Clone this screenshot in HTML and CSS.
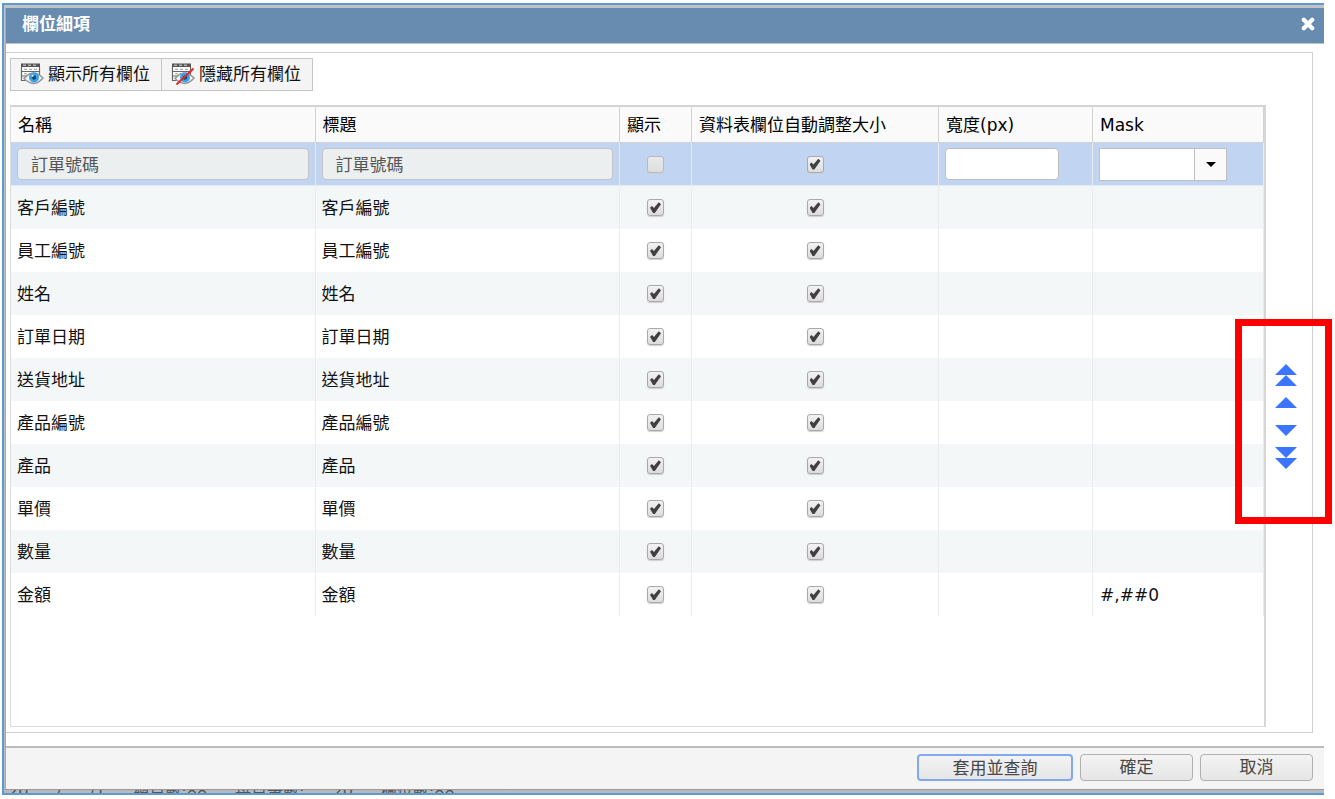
FILE: index.html
```
<!DOCTYPE html>
<html lang="zh-Hant">
<head>
<meta charset="utf-8">
<title>欄位細項</title>
<link rel="stylesheet" href="styles.css">
</head>
<body>
<div class="frame">
  <section class="dialog" role="dialog" aria-labelledby="dlg-title">
    <header class="titlebar">
      <h1 id="dlg-title">欄位細項</h1>
      <button class="close" aria-label="關閉">
        <svg width="14" height="14" viewBox="0 0 14 14"><path d="M2.8 2.8 11.2 11.2M11.2 2.8 2.8 11.2" stroke="#fff" stroke-width="4.2" stroke-linecap="round"/></svg>
      </button>
    </header>
    <div class="content">
      <div class="panel">
        <div class="toolbar">
          <button class="tool">
            <svg width="24" height="24" viewBox="0 0 24 24">
              <path d="M1 2h19v16H1z" fill="#fff"/><path d="M1 1.5h19v3.5H1z" fill="#555"/>
              <path d="M3 3.2h15" stroke="#ddd" stroke-dasharray="3 2"/>
              <path d="M1.5 5v13.5h5M19.5 5v8M1.5 9.5h18M1.5 14h7" stroke="#666" stroke-width="1.2" fill="none"/>
              <path d="M4 7.3h13M4 11.8h9M4 16.2h3" stroke="#999" stroke-dasharray="3 2"/>
              <path d="M4 16.5Q13 6 23 16Q14 26.500 4 16.500Z" fill="#f7f7f7" stroke="#999" stroke-width="1.6"/>
              <circle cx="14" cy="15.500" r="5" fill="#36a4ec"/><circle cx="14" cy="15.500" r="2.200" fill="#124a78"/><circle cx="12.600" cy="13.800" r="1" fill="#fff"/>
            </svg>
            <span>顯示所有欄位</span>
          </button>
          <button class="tool">
            <svg width="24" height="24" viewBox="0 0 24 24">
              <path d="M1 2h19v16H1z" fill="#fff"/><path d="M1 1.500h19v3.500H1z" fill="#555"/>
              <path d="M3 3.200h15" stroke="#ddd" stroke-dasharray="3 2"/>
              <path d="M1.500 5v13.500h5M19.500 5v8M1.500 9.500h18M1.500 14h7" stroke="#666" stroke-width="1.200" fill="none"/>
              <path d="M4 7.300h13M4 11.800h9M4 16.200h3" stroke="#999" stroke-dasharray="3 2"/>
              <path d="M4 16.500Q13 6 23 16Q14 26.500 4 16.500Z" fill="#f7f7f7" stroke="#999" stroke-width="1.600"/>
              <circle cx="14" cy="15.500" r="5" fill="#36a4ec"/><circle cx="14" cy="15.500" r="2.200" fill="#124a78"/>
              <path d="M5.500 22.500 22.500 6.500" stroke="#e32626" stroke-width="2"/>
            </svg>
            <span>隱藏所有欄位</span>
          </button>
        </div>
        <div class="body">
          <div class="grid">
            <table>
              <colgroup><col><col><col class="c-show"><col class="c-auto"><col class="c-width"><col class="c-mask"></colgroup>
              <thead>
                <tr><th>名稱</th><th>標題</th><th>顯示</th><th>資料表欄位自動調整大小</th><th>寬度(px)</th><th>Mask</th></tr>
              </thead>
              <tbody>
                <tr class="selected">
                  <td><input class="field" type="text" value="訂單號碼" aria-label="名稱" disabled></td>
                  <td><input class="field" type="text" value="訂單號碼" aria-label="標題" disabled></td>
                  <td class="mid"><input type="checkbox" aria-label="顯示" disabled></td>
                  <td class="mid"><input type="checkbox" aria-label="自動調整大小" checked></td>
                  <td><input class="field short" type="text" aria-label="寬度(px)"></td>
                  <td><div class="combo"><input type="text" aria-label="Mask"><button aria-label="展開"><svg width="10" height="5" viewBox="0 0 10 5"><path d="M0 0h10L5 5z"/></svg></button></div></td>
                </tr>
                <tr><td>客戶編號</td><td>客戶編號</td><td class="mid"><input type="checkbox" aria-label="顯示" checked></td><td class="mid"><input type="checkbox" aria-label="自動調整大小" checked></td><td></td><td></td></tr>
                <tr><td>員工編號</td><td>員工編號</td><td class="mid"><input type="checkbox" aria-label="顯示" checked></td><td class="mid"><input type="checkbox" aria-label="自動調整大小" checked></td><td></td><td></td></tr>
                <tr><td>姓名</td><td>姓名</td><td class="mid"><input type="checkbox" aria-label="顯示" checked></td><td class="mid"><input type="checkbox" aria-label="自動調整大小" checked></td><td></td><td></td></tr>
                <tr><td>訂單日期</td><td>訂單日期</td><td class="mid"><input type="checkbox" aria-label="顯示" checked></td><td class="mid"><input type="checkbox" aria-label="自動調整大小" checked></td><td></td><td></td></tr>
                <tr><td>送貨地址</td><td>送貨地址</td><td class="mid"><input type="checkbox" aria-label="顯示" checked></td><td class="mid"><input type="checkbox" aria-label="自動調整大小" checked></td><td></td><td></td></tr>
                <tr><td>產品編號</td><td>產品編號</td><td class="mid"><input type="checkbox" aria-label="顯示" checked></td><td class="mid"><input type="checkbox" aria-label="自動調整大小" checked></td><td></td><td></td></tr>
                <tr><td>產品</td><td>產品</td><td class="mid"><input type="checkbox" aria-label="顯示" checked></td><td class="mid"><input type="checkbox" aria-label="自動調整大小" checked></td><td></td><td></td></tr>
                <tr><td>單價</td><td>單價</td><td class="mid"><input type="checkbox" aria-label="顯示" checked></td><td class="mid"><input type="checkbox" aria-label="自動調整大小" checked></td><td></td><td></td></tr>
                <tr><td>數量</td><td>數量</td><td class="mid"><input type="checkbox" aria-label="顯示" checked></td><td class="mid"><input type="checkbox" aria-label="自動調整大小" checked></td><td></td><td></td></tr>
                <tr><td>金額</td><td>金額</td><td class="mid"><input type="checkbox" aria-label="顯示" checked></td><td class="mid"><input type="checkbox" aria-label="自動調整大小" checked></td><td></td><td class="mask">#,##0</td></tr>
              </tbody>
            </table>
          </div>
          <div class="side">
            <div class="movers">
              <button aria-label="移到最上"><svg width="22" height="22" viewBox="0 0 22 22"><path d="M11 0 22 11H0zM11 11 22 22H0z"/></svg></button>
              <button aria-label="上移"><svg width="22" height="11" viewBox="0 0 22 11"><path d="M11 0 22 11H0z"/></svg></button>
              <button class="down" aria-label="下移"><svg width="22" height="11" viewBox="0 0 22 11"><path d="M0 0h22L11 11z"/></svg></button>
              <button aria-label="移到最下"><svg width="22" height="22" viewBox="0 0 22 22"><path d="M0 0h22L11 11zM0 11h22L11 22z"/></svg></button>
              <div class="highlight"></div>
            </div>
          </div>
        </div>
      </div>
    </div>
    <footer class="actions">
      <button class="btn primary">套用並查詢</button>
      <button class="btn">確定</button>
      <button class="btn">取消</button>
    </footer>
  </section>
  <div class="backdrop" aria-hidden="true"><span>20</span><span>/</span><span>/1</span><span>總頁數:88</span><span>每頁筆數:</span><span>20</span><span>欄位數:88</span></div>
</div>
</body>
</html>
```
FILE: styles.css
```
* { box-sizing: border-box; }

body {
  margin: 0;
  background: #fff;
  color: #111;
  font: 17px/24px "DejaVu Sans", "Noto Sans CJK TC", sans-serif;
}

button, input { font: inherit; color: inherit; }
button { padding: 0; border: 0; background: none; }
svg { display: block; flex: none; }

.frame {
  display: flex;
  flex-direction: column;
  min-height: calc(100vh - 7px);
  margin: 3px 11px 4px 2px;
  padding-left: 1px;
  border: 2px solid #5b9bd5;
  border-right: 0;
  background: linear-gradient(#c3c3c3, #b9b9b9);
}

.dialog {
  flex: 1;
  display: flex;
  flex-direction: column;
  margin-top: 3px;
  border-left: 1px solid #aaa;
  border-bottom: 1px solid #999;
  background: #fff;
}

.titlebar {
  display: flex;
  align-items: center;
  justify-content: space-between;
  height: 36px;
  padding: 0 9px 3px 16px;
  border-bottom: 1px solid #b8c2cc;
  background: #688bb0;
  color: #fff;
}
.titlebar h1 { margin: 0; font-size: 17px; line-height: 24px; font-weight: 700; }

.content { flex: 1; display: flex; padding: 8px 11px 13px 0; }
.panel {
  flex: 1;
  display: flex;
  flex-direction: column;
  padding: 5px 0 5px 4px;
  border: 1px solid #cfcfcf;
  border-left: 0;
}

.toolbar { display: flex; }
.tool {
  display: flex;
  align-items: center;
  gap: 4px;
  height: 33px;
  padding: 0 11px 2px 9px;
  border: 1px solid #c6c6c6;
  background: #f4f4f4;
}
.tool + .tool { border-left: 0; }

.body { flex: 1; display: flex; margin-top: 14px; }
.grid {
  flex: 1;
  border: 1px solid #dcdcdc;
  border-top: 2px solid #d3d3d3;
  border-right: 2px solid #d6d6d6;
}
table { width: 100%; table-layout: fixed; border-collapse: separate; border-spacing: 0; }
.c-show { width: 72px; }
.c-auto { width: 247px; }
.c-width { width: 154px; }
.c-mask { width: 171px; }

th {
  height: 36px;
  padding: 0 7px;
  border-right: 1px solid #d3d3d3;
  border-bottom: 1px solid #d3d3d3;
  background: #fafafa;
  font-weight: 400;
  text-align: left;
  color: #000;
  white-space: nowrap;
}
td { height: 43px; padding: 0 6px 0 6px; border-right: 1px solid #ececec; }
tbody tr:nth-child(even) { background: #f3f7f8; }
.selected { background: #c1d4f2; }
.selected td { border-bottom: 1px solid #e2ebf5; }
.mid { text-align: center; }
.mask { padding-left: 7px; }

.field {
  display: block;
  width: 100%;
  height: 32px;
  padding: 0 13px 2px;
  border: 1px solid #bfbfbf;
  border-radius: 4px;
  background: #fff;
}
.field:disabled { border-color: #c4c4c4; background: #ebefef; color: #555; }
.field.short { width: 114px; }

.combo { display: flex; width: 128px; height: 33px; border: 1px solid #bfbfbf; background: #fff; }
.combo input { flex: 1; min-width: 0; padding: 0 6px; border: 0; background: none; }
.combo button {
  display: grid;
  place-items: center;
  width: 32px;
  border-left: 1px solid #bfbfbf;
  background: #fafafa;
}

input[type="checkbox"] {
  appearance: none;
  display: block;
  width: 17px;
  height: 17px;
  margin: 0 auto;
  border: 1px solid #a9a9a9;
  border-radius: 3px;
  background: linear-gradient(#f2f2f2, #dcdcdc);
  box-shadow: 0 1px 1px #cfcfcf;
}
input[type="checkbox"]:disabled { border-color: #bababa; background: linear-gradient(#e9e9e9, #dedede); }
input[type="checkbox"]:checked::before {
  content: "";
  display: block;
  width: 11px;
  height: 11px;
  margin: 2px;
  background: #404040;
  clip-path: polygon(0 52%, 18% 36%, 36% 54%, 80% 2%, 100% 20%, 44% 100%, 28% 100%);
}

.side { flex: none; display: flex; align-items: center; width: 46px; padding-left: 9px; }
.movers { position: relative; display: flex; flex-direction: column; fill: #3b74ff; }
.movers button + button { margin-top: 11px; }
.movers button.down { margin-top: 17px; }
.highlight {
  position: absolute;
  inset: -45px -35px -55px -40px;
  border: 7px solid #f00;
  pointer-events: none;
}

.actions {
  display: flex;
  align-items: center;
  justify-content: flex-end;
  gap: 7px;
  height: 43px;
  padding: 0 11px 3px 0;
  border-top: 2px solid #bcbcbc;
  background: #f4f4f4;
}
.btn {
  width: 113px;
  height: 27px;
  border: 1px solid #b0b0b0;
  border-radius: 4px;
  background: linear-gradient(#f3f3f3, #e6e6e6);
  color: #484848;
}
.primary { width: 156px; border: 2px solid #80a9f0; }

.backdrop {
  display: flex;
  align-items: center;
  gap: 28px;
  height: 3px;
  padding-left: 3px;
  overflow: hidden;
  color: #555;
  font-size: 16px;
  white-space: nowrap;
}
```
